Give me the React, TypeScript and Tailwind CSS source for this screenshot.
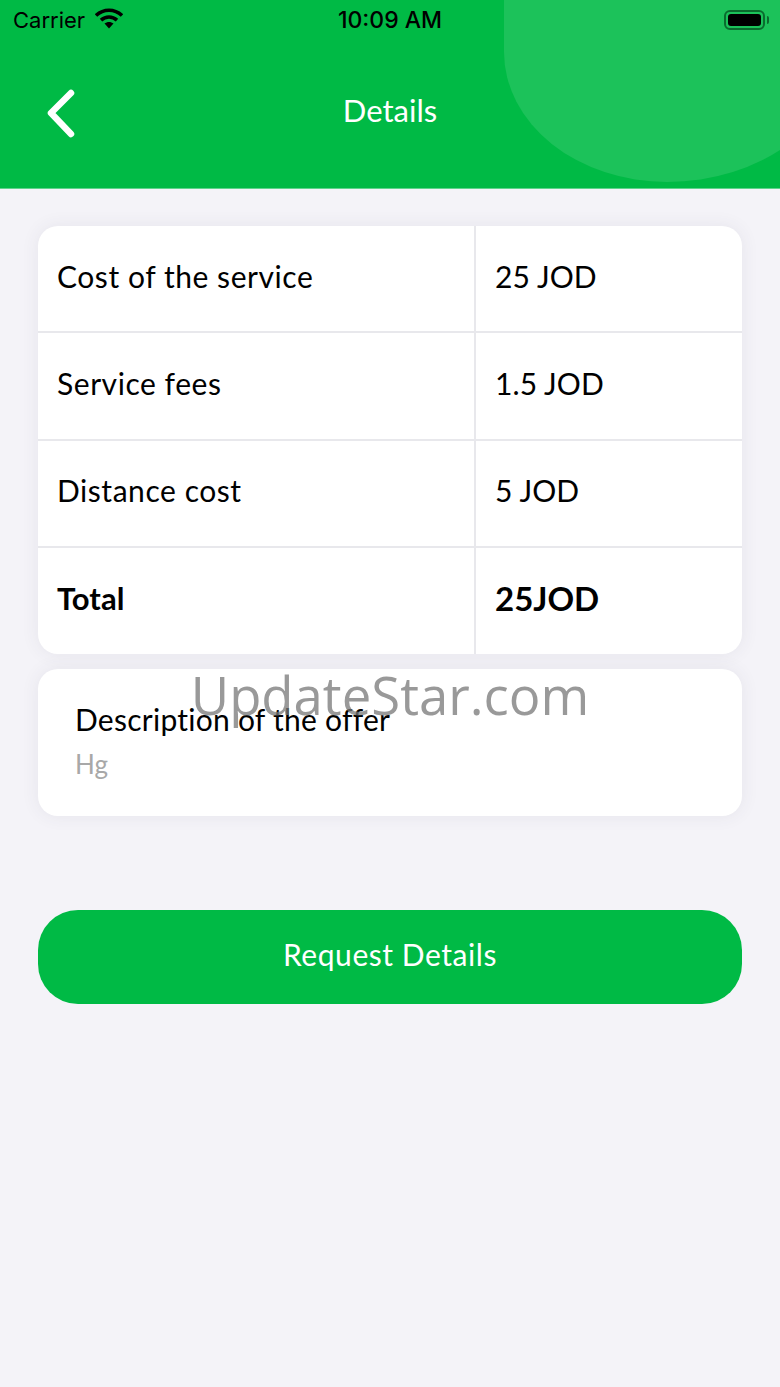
import React from 'react';

const rows = [
  { label: 'Cost of the service', value: '25 JOD' },
  { label: 'Service fees', value: '1.5 JOD' },
  { label: 'Distance cost', value: '5 JOD' },
];

const font = "font-['Lato','Noto_Sans',sans-serif]";

const StatusBar = () => (
  <div className="relative flex h-[40px] items-center justify-between pl-[13px] pr-[11px] text-black">
    <div className="flex items-center gap-[10px]">
      <span className="font-['Inter',sans-serif] text-[22px] leading-none">Carrier</span>
      <svg width="28" height="21" viewBox="0 0 28 21" className="mb-[3px]">
        <path d="M1 7.5C8.5 .5 19.5 .5 27 7.5" fill="none" stroke="#000" strokeWidth="3.6" />
        <path d="M6 12.2C10.7 8 17.3 8 22 12.2" fill="none" stroke="#000" strokeWidth="3.6" />
        <path d="M9.5 15.5C12 13.4 16 13.4 18.5 15.5L14 20.5Z" fill="#000" />
      </svg>
    </div>
    <span className="absolute left-0 right-0 text-center font-['Inter',sans-serif] text-[23px] font-medium leading-none">10:09 AM</span>
    <div className="flex items-center gap-[2px]">
      <div className="h-[20px] w-[41px] rounded-[6px] border-2 border-[#0a6b2e] p-[2px]">
        <div className="h-full w-full rounded-[3px] bg-black" />
      </div>
      <div className="h-[8px] w-[2px] rounded-r-full bg-[#0a6b2e]" />
    </div>
  </div>
);

export default function App() {
  return (
    <div className={`relative min-h-[1387px] w-full overflow-hidden bg-[#f4f3f8] ${font}`}>
      <header className="relative h-[189px] overflow-hidden border-b border-[#5fd48c] bg-[#00ba45]">
        <div className="absolute left-[504px] top-[-100px] h-[282px] w-[335px] rounded-bl-[163px_130px] rounded-br-[172px_130px] bg-[#1cc25a]" />
        <div className="relative">
          <StatusBar />
          <div className="relative mt-[34px] flex h-[70px] items-center justify-center">
            <svg width="36" height="52" viewBox="0 0 36 52" className="absolute left-[44px] top-[14px]">
              <path d="M27 5L7 25L27 46" fill="none" stroke="#fff" strokeWidth="6.5" strokeLinecap="round" strokeLinejoin="round" />
            </svg>
            <h1 className="pt-[2px] text-[31px] font-normal leading-none text-white">Details</h1>
          </div>
        </div>
      </header>

      <main className="flex flex-col px-[38px] pt-[37px]">
        <section className="overflow-hidden rounded-[20px] bg-white shadow-[0_0_18px_rgba(60,60,90,0.08)]">
          {rows.map((row) => (
            <div key={row.label} className="grid h-[107.3px] grid-cols-[438px_1fr] border-b-2 border-[#e8e8ec] text-[30px] text-black">
              <div className="flex items-center border-r-2 border-[#e8e8ec] pb-[5px] pl-[19px] tracking-[0.55px]">{row.label}</div>
              <div className="flex items-center pb-[5px] pl-[19px] tracking-[0.1px]">{row.value}</div>
            </div>
          ))}
          <div className="grid h-[106px] grid-cols-[438px_1fr] text-black">
            <div className="flex items-center border-r-2 border-[#e8e8ec] pb-[5px] pl-[19px] text-[31px] font-bold">Total</div>
            <div className="flex items-center pb-[5px] pl-[19px] text-[33px] font-bold">25JOD</div>
          </div>
        </section>

        <section className="mt-[15px] flex h-[147px] flex-col rounded-[20px] bg-white pl-[37px] pt-[32px] shadow-[0_0_18px_rgba(60,60,90,0.08)]">
          <p className="text-[30px] leading-[36px] tracking-[0.25px] text-black">Description of the offer</p>
          <p className="mt-[9px] text-[26px] leading-[36px] text-[#a8a8a8]">Hg</p>
        </section>

        <button className="mt-[94px] h-[94px] rounded-[40px] bg-[#00ba45] pb-[4px] text-[30px] tracking-[0.55px] text-white">Request Details</button>
      </main>

      <div className="absolute left-0 right-0 top-[661px] text-center font-['Open_Sans',sans-serif] text-[52.7px] font-normal leading-[68px] text-[#777777]/75">UpdateStar.com</div>
    </div>
  );
}
